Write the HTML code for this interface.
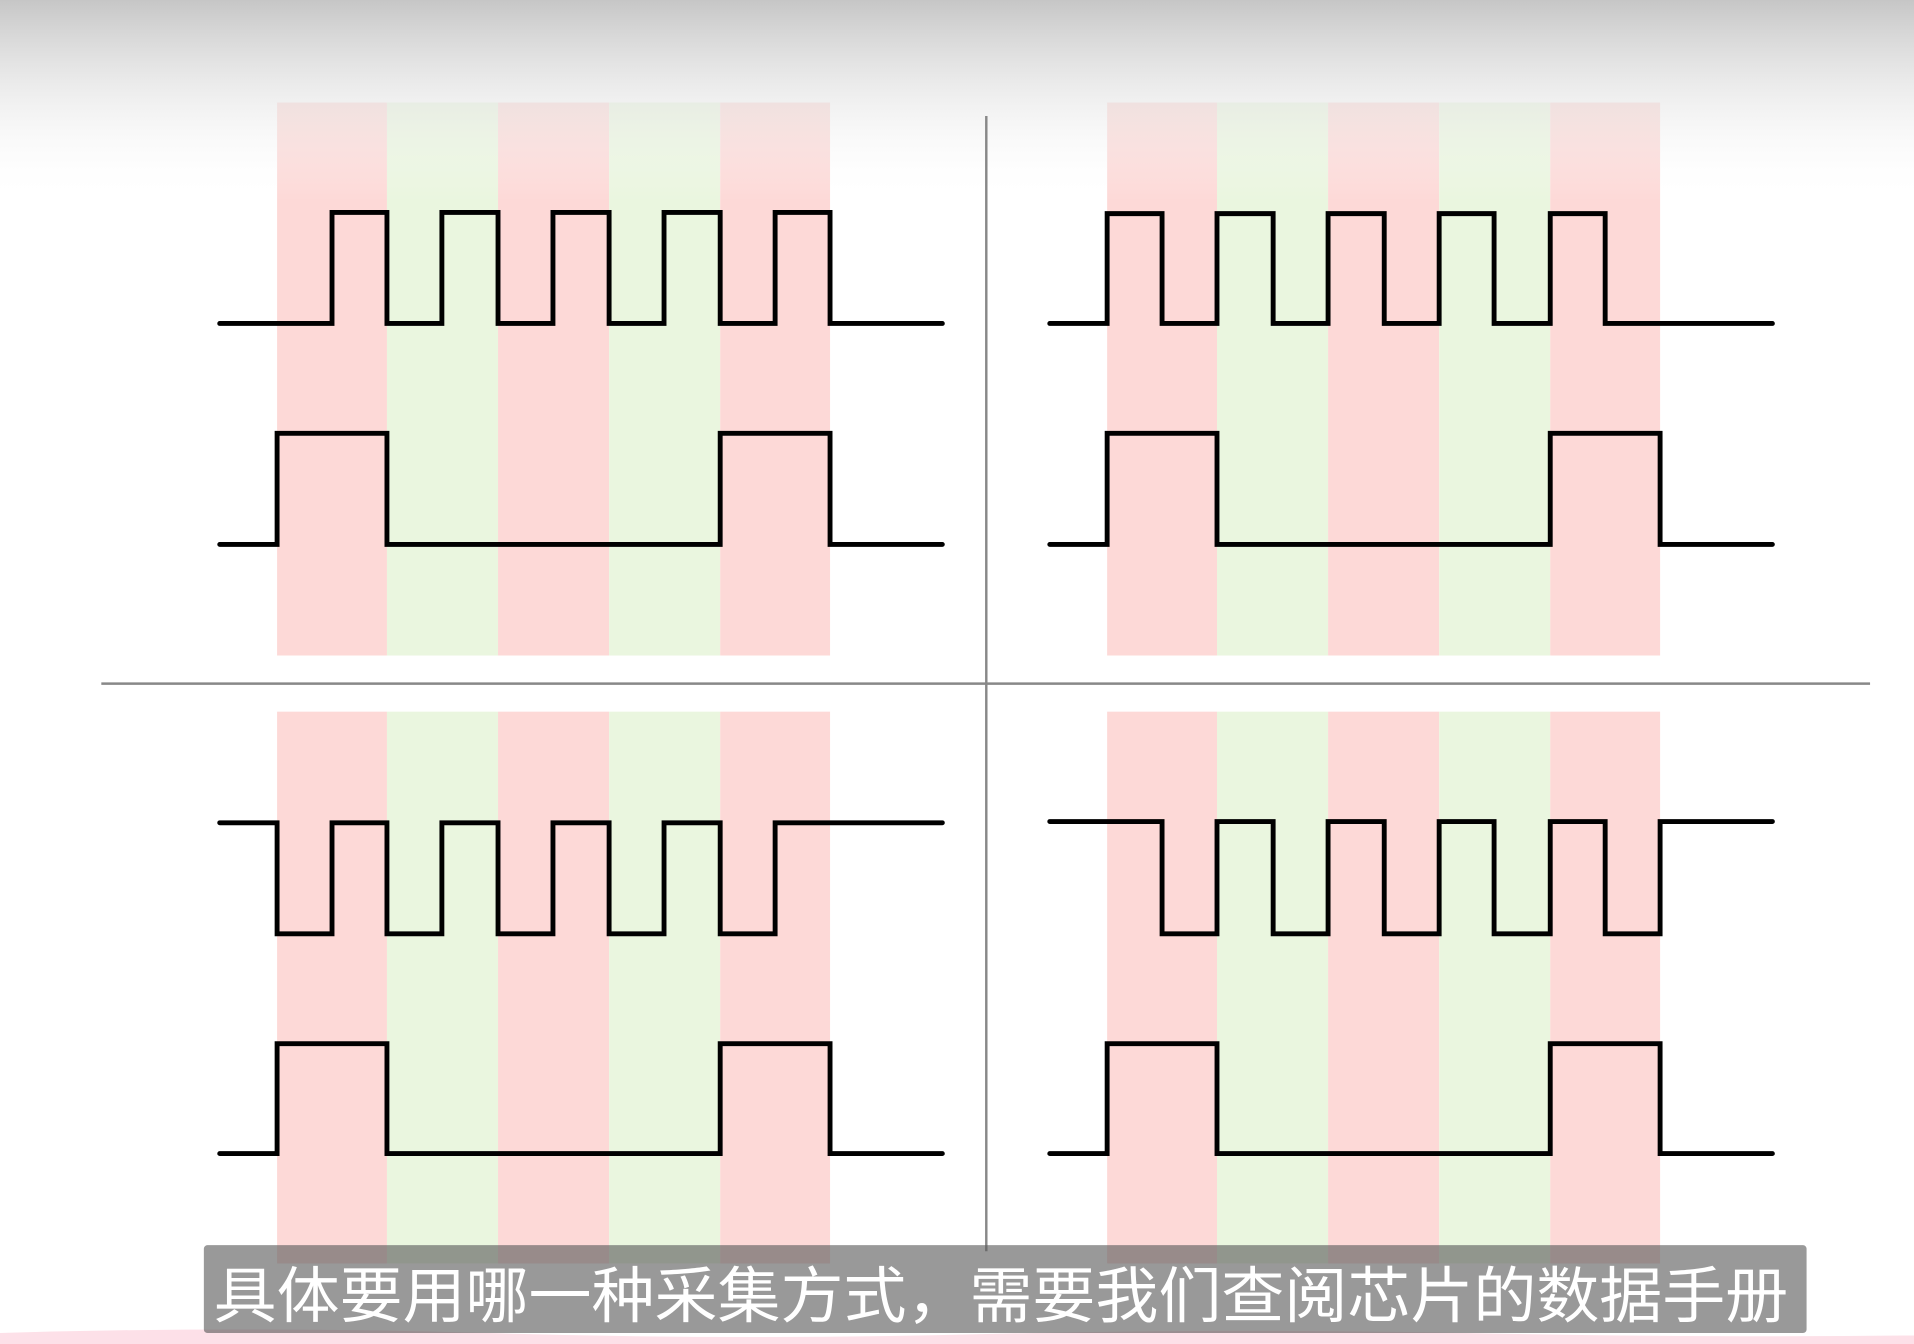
<!DOCTYPE html>
<html><head><meta charset="utf-8"><style>html,body{margin:0;padding:0;background:#fff;overflow:hidden}svg{display:block}</style></head>
<body>
<svg width="1914" height="1344" viewBox="0 0 1568 1101" preserveAspectRatio="none" xmlns="http://www.w3.org/2000/svg">
<defs><linearGradient id="g" x1="0" y1="0" x2="0" y2="1"><stop offset="0" stop-color="#c6c6c6" stop-opacity="1"/><stop offset="0.5" stop-color="#e6e6e6" stop-opacity="0.6"/><stop offset="1" stop-color="#ffffff" stop-opacity="0"/></linearGradient></defs>
<rect width="1568" height="1101" fill="#fff"/>
<g>
<rect x="227" y="84" width="90" height="453" fill="#fdd9d7"/><rect x="317" y="84" width="91" height="453" fill="#eaf6df"/><rect x="408" y="84" width="91" height="453" fill="#fdd9d7"/><rect x="499" y="84" width="91" height="453" fill="#eaf6df"/><rect x="590" y="84" width="90" height="453" fill="#fdd9d7"/>
<rect x="907" y="84" width="90" height="453" fill="#fdd9d7"/><rect x="997" y="84" width="91" height="453" fill="#eaf6df"/><rect x="1088" y="84" width="91" height="453" fill="#fdd9d7"/><rect x="1179" y="84" width="91" height="453" fill="#eaf6df"/><rect x="1270" y="84" width="90" height="453" fill="#fdd9d7"/>
<rect x="227" y="583" width="90" height="452" fill="#fdd9d7"/><rect x="317" y="583" width="91" height="452" fill="#eaf6df"/><rect x="408" y="583" width="91" height="452" fill="#fdd9d7"/><rect x="499" y="583" width="91" height="452" fill="#eaf6df"/><rect x="590" y="583" width="90" height="452" fill="#fdd9d7"/>
<rect x="907" y="583" width="90" height="452" fill="#fdd9d7"/><rect x="997" y="583" width="91" height="452" fill="#eaf6df"/><rect x="1088" y="583" width="91" height="452" fill="#fdd9d7"/><rect x="1179" y="583" width="91" height="452" fill="#eaf6df"/><rect x="1270" y="583" width="90" height="452" fill="#fdd9d7"/>
</g>
<rect x="0" y="0" width="1568" height="165" fill="url(#g)"/>
<line x1="808" y1="95" x2="808" y2="1025" stroke="#888" stroke-width="2"/>
<line x1="83" y1="560" x2="1532" y2="560" stroke="#888" stroke-width="2"/>
<g fill="none" stroke="#000" stroke-width="4" stroke-linecap="round" stroke-linejoin="miter">
<path d="M180 265 H272 V174 H317 V265 H362 V174 H408 V265 H453 V174 H499 V265 H544 V174 H590 V265 H635 V174 H680 V265 H772"/>
<path d="M180 446 H227 V355 H317 V446 H590 V355 H680 V446 H772"/>
<path d="M860 265 H907 V175 H952 V265 H997 V175 H1043 V265 H1088 V175 H1134 V265 H1179 V175 H1224 V265 H1270 V175 H1315 V265 H1452"/>
<path d="M860 446 H907 V355 H997 V446 H1270 V355 H1360 V446 H1452"/>
<path d="M180 674 H227 V765 H272 V674 H317 V765 H362 V674 H408 V765 H453 V674 H499 V765 H544 V674 H590 V765 H635 V674 H772"/>
<path d="M180 945 H227 V855 H317 V945 H590 V855 H680 V945 H772"/>
<path d="M860 673 H952 V765 H997 V673 H1043 V765 H1088 V673 H1134 V765 H1179 V673 H1224 V765 H1270 V673 H1315 V765 H1360 V673 H1452"/>
<path d="M860 945 H907 V855 H997 V945 H1270 V855 H1360 V945 H1452"/>
</g>
<path d="M0 1092 Q200 1086 400 1092 T800 1093 T1200 1092 T1568 1094 V1101 H0 Z" fill="#fde0e8"/>
<rect x="167" y="1020" width="1313" height="72" rx="3" fill="#5a5a5a" fill-opacity="0.62"/>
<text x="175" y="1079" font-size="50" fill="#fff" textLength="1290" lengthAdjust="spacingAndGlyphs" font-family="'Liberation Sans','Noto Sans CJK SC',sans-serif">具体要用哪一种采集方式，需要我们查阅芯片的数据手册</text>
</svg>
</body></html>
